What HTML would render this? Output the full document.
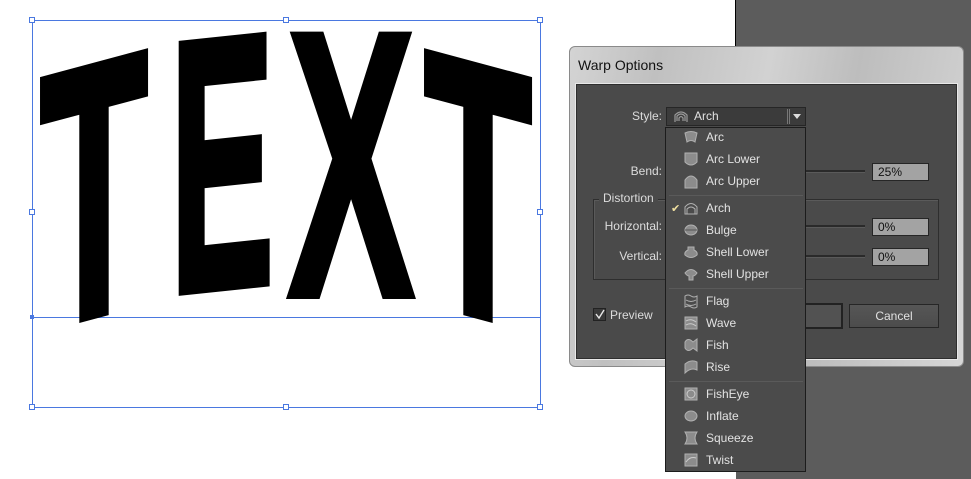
<!DOCTYPE html>
<html><head><meta charset="utf-8"><style>
*{margin:0;padding:0;box-sizing:border-box}
body{width:971px;height:479px;overflow:hidden;background:#fff;position:relative;font-family:"Liberation Sans",sans-serif;font-size:12px}
.a{position:absolute}
.lbl{position:absolute;color:#dcdcdc;font-size:12px;text-align:right}
.fld{position:absolute;background:#a3a3a3;border:1px solid #262626;color:#111;font-size:12px;padding:1px 0 0 5px;height:18px}
.sl{position:absolute;height:3px;background:#2a2a2a;border-bottom:1px solid #5a5a5a}
.mi{position:absolute;left:706px;color:#e2e2e2;font-size:12px}
.sep{position:absolute;left:669px;width:134px;height:1px;background:#363636;border-bottom:1px solid #5a5a5a}
.h{position:absolute;width:6px;height:6px;border:1px solid #4a78e0;background:#fff}
</style></head><body>
<div class="a" style="left:736px;top:0;width:235px;height:479px;background:#5c5c5c"></div>
<div class="a" style="left:735px;top:0;width:1px;height:46px;background:#000"></div>

<div class="a" style="left:32px;top:20px;width:509px;height:388px;border:1px solid #4a78e0"></div>
<div class="a" style="left:32px;top:317px;width:509px;height:1px;background:#4a78e0"></div>
<div class="h" style="left:29px;top:17px"></div><div class="h" style="left:283px;top:17px"></div><div class="h" style="left:537px;top:17px"></div>
<div class="h" style="left:29px;top:209px"></div><div class="h" style="left:537px;top:209px"></div>
<div class="h" style="left:29px;top:404px"></div><div class="h" style="left:283px;top:404px"></div><div class="h" style="left:537px;top:404px"></div>
<div class="a" style="left:30px;top:315px;width:4px;height:4px;background:#4a78e0"></div>

<svg class="a" style="left:0;top:0" width="560" height="420">
<g font-family="Liberation Sans" font-weight="bold" fill="#000" stroke="#000" stroke-width="8" stroke-linejoin="miter">
<g transform="translate(94,190) skewY(-15) translate(-94,-190)"><text x="40" y="315" font-size="361" textLength="108" lengthAdjust="spacingAndGlyphs">T</text></g>
<g transform="translate(225,165) skewY(-6) translate(-225,-165)"><text x="170" y="287" font-size="359" textLength="104" lengthAdjust="spacingAndGlyphs">E</text></g>
<g><text x="288" y="295" textLength="126" lengthAdjust="spacingAndGlyphs" font-size="377">X</text></g>
<g transform="translate(478,190) skewY(15) translate(-478,-190)"><text x="424" y="315" font-size="361" textLength="108" lengthAdjust="spacingAndGlyphs">T</text></g>
</g></svg>

<div class="a" style="left:569px;top:46px;width:395px;height:321px;border-radius:6px;border:1px solid #8a8a8a;background:linear-gradient(100deg,#d4d4d4 0%,#c0c0c0 20%,#d2d2d2 45%,#bdbdbd 65%,#d6d6d6 100%)"></div>
<div class="a" style="left:578px;top:57px;color:#111;font-size:14px">Warp Options</div>
<div class="a" style="left:576px;top:84px;width:381px;height:275px;background:#4a4a4a;border:1px solid #2e2e2e;box-shadow:0 0 0 1px #e8e8e8"></div>

<div class="lbl" style="left:600px;top:109px;width:62px">Style:</div>
<div class="a" style="left:666px;top:107px;width:140px;height:19px;background:#3b3b3b;border:1px solid #262626"></div>
<svg class="a" style="left:674px;top:109px" width="14" height="14"><path d="M1 13V6Q7 0 13 6V13M3 12V7Q7 3 11 7V12M5 12V9Q7 6 9 9V12" fill="none" stroke="#9a9a9a" stroke-width="1.2"/></svg>
<div class="a" style="left:694px;top:109px;color:#e2e2e2">Arch</div>
<div class="a" style="left:787px;top:109px;width:1px;height:15px;background:#777"></div>
<div class="a" style="left:789px;top:109px;width:1px;height:15px;background:#777"></div>
<div class="a" style="left:793px;top:114px;width:0;height:0;border-left:4px solid transparent;border-right:4px solid transparent;border-top:5px solid #ddd"></div>

<div class="lbl" style="left:600px;top:164px;width:62px">Bend:</div>
<div class="sl" style="left:806px;top:170px;width:59px"></div>
<div class="fld" style="left:872px;top:163px;width:57px">25%</div>

<div class="a" style="left:593px;top:199px;width:346px;height:81px;border:1px solid #2e2e2e;box-shadow:inset 1px 1px 0 #5a5a5a"></div>
<div class="a" style="left:599px;top:191px;background:#4a4a4a;color:#dcdcdc;padding:0 4px">Distortion</div>
<div class="lbl" style="left:595px;top:219px;width:67px">Horizontal:</div>
<div class="sl" style="left:806px;top:225px;width:59px"></div>
<div class="fld" style="left:872px;top:218px;width:57px">0%</div>
<div class="lbl" style="left:595px;top:249px;width:67px">Vertical:</div>
<div class="sl" style="left:806px;top:255px;width:59px"></div>
<div class="fld" style="left:872px;top:248px;width:57px">0%</div>

<div class="a" style="left:593px;top:308px;width:13px;height:13px;background:#3a3a3a;border:1px solid #222"></div>
<svg class="a" style="left:593px;top:308px" width="13" height="13"><path d="M3 6L6 10L11 2" fill="none" stroke="#e8e8e8" stroke-width="1.4"/></svg>
<div class="a" style="left:610px;top:308px;color:#dcdcdc">Preview</div>
<div class="a" style="left:780px;top:303px;width:63px;height:26px;background:#525252;border:2px solid #222"></div>
<div class="a" style="left:849px;top:304px;width:90px;height:24px;background:linear-gradient(#565656,#4c4c4c);border:1px solid #262626;color:#e0e0e0;text-align:center;line-height:22px">Cancel</div>

<div class="a" style="left:665px;top:127px;width:141px;height:345px;background:#4b4b4b;border:1px solid #1c1c1c"></div>
<div class="sep" style="top:195px"></div>
<div class="sep" style="top:288px"></div>
<div class="sep" style="top:381px"></div>
<div class="a" style="left:671px;top:202px;color:#f0e0a0;font-size:11px">✔</div>

<svg class="a" style="left:0;top:0;pointer-events:none" width="971" height="479">
<g fill="#8c8c8c" stroke="#b0b0b0" stroke-width="1">
<path d="M685 133Q691 130 697 133L695 142Q691 139 687 142Z"/>
<path d="M685 153H697V162Q691 168 685 162Z"/>
<path d="M685 188V180Q691 172 697 180V188Z"/>
<path d="M685 214V207Q691 200 697 207V214Z" fill="none"/><path d="M687 214V209Q691 205 695 209V214" fill="none"/>
<ellipse cx="691" cy="230" rx="6" ry="5"/><path d="M685 230H697" stroke="#555"/>
<path d="M688 247H694V250Q698 252 697 255Q691 260 685 255Q684 252 688 250Z"/>
<path d="M685 273Q691 266 697 273Q695 276 693 276V280H689V276Q687 276 685 273Z"/>
<path d="M685 296Q688 294 691 296Q694 298 697 296V307Q694 309 691 307Q688 305 685 307Z" fill="none"/><path d="M686 300Q691 303 696 300M686 304Q691 307 696 304" fill="none"/>
<rect x="685" y="317" width="12" height="12"/><path d="M686 321Q691 318 696 322M686 325Q691 322 696 326" fill="none" stroke="#ccc"/>
<path d="M693 342Q688 337 685 342V348Q688 353 693 348L697 351V339Z"/>
<path d="M685 364Q691 359 697 362V370Q691 367 685 373Z"/>
<rect x="685" y="388" width="12" height="12"/><circle cx="691" cy="394" r="4" fill="none" stroke="#ccc"/>
<ellipse cx="691" cy="416" rx="6" ry="5"/>
<path d="M685 432H697Q693 438 697 444H685Q689 438 685 432Z"/>
<rect x="685" y="454" width="12" height="12"/><path d="M686 462Q690 456 696 458" fill="none" stroke="#ccc"/>
</g></svg>

<div class="mi" style="top:130px">Arc</div>
<div class="mi" style="top:152px">Arc Lower</div>
<div class="mi" style="top:174px">Arc Upper</div>
<div class="mi" style="top:201px">Arch</div>
<div class="mi" style="top:223px">Bulge</div>
<div class="mi" style="top:245px">Shell Lower</div>
<div class="mi" style="top:267px">Shell Upper</div>
<div class="mi" style="top:294px">Flag</div>
<div class="mi" style="top:316px">Wave</div>
<div class="mi" style="top:338px">Fish</div>
<div class="mi" style="top:360px">Rise</div>
<div class="mi" style="top:387px">FishEye</div>
<div class="mi" style="top:409px">Inflate</div>
<div class="mi" style="top:431px">Squeeze</div>
<div class="mi" style="top:453px">Twist</div>
</body></html>
